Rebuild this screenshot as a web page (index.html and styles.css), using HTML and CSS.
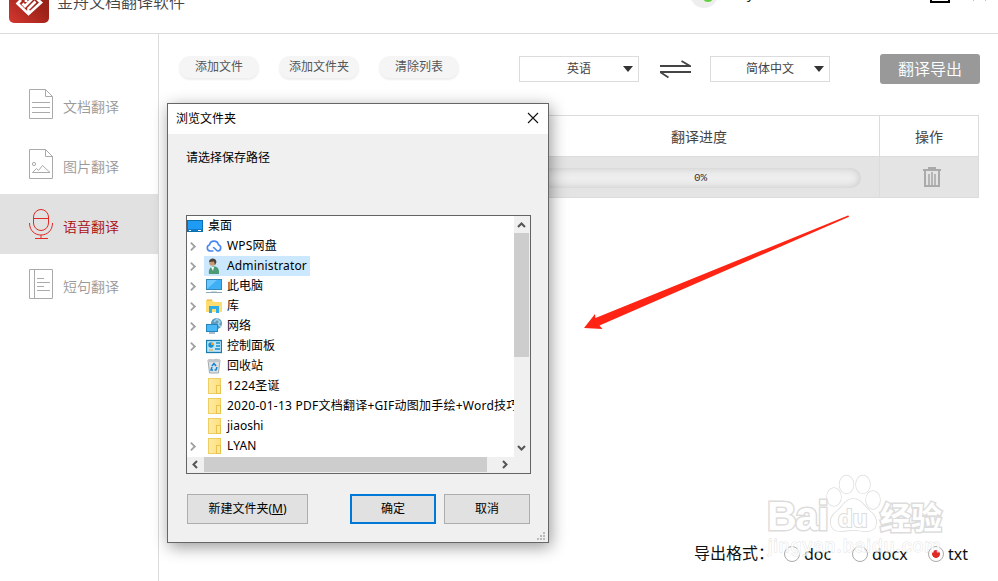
FILE: index.html
```html
<!DOCTYPE html>
<html lang="zh-CN">
<head>
<meta charset="utf-8">
<title>金舟文档翻译软件</title>
<link rel="stylesheet" href="styles.css">
</head>
<body>
<div class="app">
  <header class="header">
    <svg class="logo" width="40" height="40" viewBox="0 0 40 40">
      <defs><linearGradient id="lg" x1="0" y1="1" x2="1" y2="0"><stop offset="0" stop-color="#d4382f"/><stop offset=".6" stop-color="#9c2219"/><stop offset="1" stop-color="#8c2018"/></linearGradient></defs>
      <rect width="40" height="40" rx="5" fill="url(#lg)"/>
      <path d="M12 17 8.500 20.500 19.500 31 32 19.500 28 16M13.500 20.500 16 23 24 15M19 26 26.500 18.500M19.500 31V25.500M17 13v6" fill="none" stroke="#fff" stroke-width="2.700"/>
    </svg>
    <h1 class="brand">金舟文档翻译软件</h1>
    <svg class="avatar" width="28" height="28" viewBox="0 0 28 28"><circle cx="14" cy="14" r="14" fill="#eee"/><ellipse cx="18" cy="18.500" rx="4.500" ry="3.500" fill="#5fd13b"/></svg>
    <span class="user">y</span>
    <svg class="winctl" width="60" height="16" viewBox="0 0 60 16"><path d="M2 0V14H20V0" fill="none" stroke="#000" stroke-width="2"/><path d="M44.500 12.500 50 7M57 12.500 51 7" stroke="#888" fill="none"/></svg>
  </header>
  <div class="content">
    <nav class="side">
      <a class="nav"><svg width="24" height="30" viewBox="0 0 24 30"><path d="M.5.5H16.500L23.500 7.500V29.500H.5ZM16.500.5V7.500H23.500M3 13.500H21M3 18.500H21M3 23.500H21"/></svg><span>文档翻译</span></a>
      <a class="nav"><svg width="24" height="30" viewBox="0 0 24 30"><path d="M.5.5H16.500L23.500 7.500V29.500H.5ZM16.500.5V7.500H23.500M3.500 23.500 7.500 19.500 9.500 21.500 13.500 16.500 21 23.500Z"/><circle cx="5" cy="15" r="1.600"/></svg><span>图片翻译</span></a>
      <a class="nav active"><svg width="24" height="30" viewBox="0 0 24 30"><rect x="4.500" y=".5" width="15" height="21" rx="7.500"/><path d="M4.500 9.500H19.500M.5 14C.5 30 23.500 30 23.500 14M12 26V29.500M6 29.500H19"/></svg><span>语音翻译</span></a>
      <a class="nav"><svg width="24" height="30" viewBox="0 0 24 30"><path d="M.5.5H23.500V29.500H.5ZM5.500.5V29.500M8 9.500H15M8 13.500H21M8 17.500H15M8 21.500H21"/></svg><span>短句翻译</span></a>
    </nav>
    <main class="main">
      <div class="toolbar">
        <span class="pill">添加文件</span><span class="pill">添加文件夹</span><span class="pill">清除列表</span>
        <span class="select from">英语</span>
        <svg class="swap" width="31" height="19" viewBox="0 0 31 19"><path d="M0 6H30L21.500 1M31 12H0L8.500 17.500" fill="none" stroke="#444" stroke-width="1.800"/></svg>
        <span class="select to">简体中文</span>
        <span class="export">翻译导出</span>
      </div>
      <div class="table">
        <div class="th">翻译进度</div><div class="th op">操作</div>
        <div class="td"><div class="progress">0%</div></div>
        <div class="td op"><svg width="18" height="21" viewBox="0 0 18 21" fill="none" stroke="#aaa"><path d="M0 3H18M5 1H13" stroke-width="2"/><path d="M2 3V19H16V3" stroke-width="2"/><path d="M6 7V18M9 5V18M12 7V18" stroke-width="1.600"/></svg></div>
      </div>
      <div class="spacer"></div>
      <div class="formats">
        <span class="label">导出格式：</span>
        <span class="radio"><i></i>doc</span><span class="radio r2"><i></i>docx</span><span class="radio r3"><i class="on"></i>txt</span>
      </div>
    </main>
  </div>
</div>

<section class="dialog">
  <div class="title">浏览文件夹<svg width="12" height="12" viewBox="0 0 12 12"><path d="M1 1 11 11M11 1 1 11" stroke="#111" stroke-width="1.100"/></svg></div>
  <p class="prompt">请选择保存路径</p>
  <div class="tree">
    <div class="rows">
      <div class="row root"><svg width="16" height="16" viewBox="0 0 16 16"><rect x=".5" y="2.500" width="15" height="11" fill="#1d9bf5" stroke="#0b6fae"/><path d="M1 12H15" stroke="#0a5a96"/><path d="M2 12.500H4M11 12.500H14" stroke="#fff"/></svg><span>桌面</span></div>
      <div class="row"><b></b><svg width="16" height="16" viewBox="0 0 16 16"><path d="M7.500 13H4A3.200 3.200 0 0 1 3.500 6.800 4.600 4.600 0 0 1 12.500 6.800 3.200 3.200 0 0 1 12 13C9.500 13 9.500 9.500 6.800 9.500" fill="none" stroke="#4a86f0" stroke-width="1.600"/></svg><span class="lat">WPS网盘</span></div>
      <div class="row"><b></b><div class="sel"><svg width="16" height="16" viewBox="0 0 16 16"><path d="M3 16C2 11 5 8.500 7 8.500 11 8 13.500 10 13 16Z" fill="#4c9a77"/><circle cx="6.500" cy="4.500" r="3.300" fill="#c99a72"/><path d="M3 4C3-.5 10-1 10.500 4L9 7 8 3.500Z" fill="#4b4038"/><path d="M5 9 7 13 8 9" fill="#fff"/></svg><span class="admin">Administrator</span></div></div>
      <div class="row"><b></b><svg width="16" height="16" viewBox="0 0 16 16"><rect x=".5" y="1.500" width="15" height="10" fill="#6cc8ff" stroke="#3487b9"/><path d="M1 11 11 2H15V11Z" fill="#3fb0f6"/><path d="M5 13.500H11" stroke="#cdd" /><path d="M0 14.500H16" stroke="#8fa9b8"/></svg><span>此电脑</span></div>
      <div class="row"><b></b><svg width="16" height="16" viewBox="0 0 16 16"><path d="M0 2H6L8 4H16V14H0Z" fill="#ffdc70"/><path d="M1 2H6" stroke="#e9a52c"/><path d="M3 15V8H13V15H10V11H6V15Z" fill="#2eade7"/></svg><span>库</span></div>
      <div class="row"><b></b><svg width="16" height="16" viewBox="0 0 16 16"><circle cx="10.500" cy="5.500" r="5.500" fill="#5a9cc0"/><path d="M8 4 11 1 14 4 12 6 15 9" fill="none" stroke="#a4d2e8" stroke-width="1.500"/><rect x=".5" y="6.500" width="11" height="7" fill="#4bb8f8" stroke="#2784ba"/><path d="M3 15H9" stroke="#587d93"/></svg><span>网络</span></div>
      <div class="row"><b></b><svg width="16" height="16" viewBox="0 0 16 16"><rect x=".5" y="2.500" width="15" height="12" fill="#bce7fb" stroke="#187cac" stroke-width="1.300"/><circle cx="5" cy="7" r="2.700" fill="#168ed0"/><path d="M5 7V4.300A2.700 2.700 0 0 1 7.700 7Z" fill="#f49b26"/><path d="M10 5H14M10 8H14M9 11H14" stroke="#168ed0" stroke-width="1.500"/><path d="M3 12H7" stroke="#f49b26"/></svg><span>控制面板</span></div>
      <div class="row"><b class="none"></b><svg width="16" height="16" viewBox="0 0 16 16"><path d="M2 2H14L12.500 15H3.500Z" fill="#dde1e3" stroke="#a3abaf"/><path d="M2 2 5 1 7 2 10 .5 14 2V4H2Z" fill="#bfc5c8"/><path d="M6 8 8 5.500 10 8M11 9 10 12H8.500M7 12H5L6 9" fill="none" stroke="#1784d0" stroke-width="1.500"/></svg><span>回收站</span></div>
      <div class="row"><b class="none"></b><i class="folder"></i><span class="lat">1224圣诞</span></div>
      <div class="row"><b class="none"></b><i class="folder"></i><span class="long">2020-01-13 PDF文档翻译+GIF动图加手绘+Word技巧</span></div>
      <div class="row"><b class="none"></b><i class="folder"></i><span>jiaoshi</span></div>
      <div class="row"><b></b><i class="folder"></i><span class="lat">LYAN</span></div>
    </div>
    <div class="vbar"><svg width="9" height="6" viewBox="0 0 9 6"><path d="M1 5 4.500 1.500 8 5"/></svg><div class="vthumb"></div><svg class="down" width="9" height="6" viewBox="0 0 9 6"><path d="M1 1 4.500 4.500 8 1"/></svg></div>
    <div class="hbar"><svg width="6" height="9" viewBox="0 0 6 9"><path d="M5 1 1.500 4.500 5 8"/></svg><div class="hthumb"></div><svg class="right" width="6" height="9" viewBox="0 0 6 9"><path d="M1 1 4.500 4.500 1 8"/></svg></div>
  </div>
  <div class="buttons"><span class="btn new">新建文件夹(<u>M</u>)</span><span class="btn ok">确定</span><span class="btn">取消</span></div>
  <svg class="grip" width="8" height="8" viewBox="0 0 8 8"><path d="M6 0H8V2H6ZM3 3H5V5H3ZM6 3H8V5H6ZM0 6H2V8H0ZM3 6H5V8H3ZM6 6H8V8H6Z" fill="#bbb"/></svg>
</section>

<svg class="arrow" width="266" height="116" viewBox="0 0 266 116"><path d="M264 .5Q266 .5 264.500 2L15.500 110.500 18.500 114 0 113 11 99 11.500 103Z" fill="#ff2414"/></svg>

<div class="mark">
  <svg width="56" height="60" viewBox="0 0 56 60"><g fill="#fff" stroke="#ddd" stroke-width="1.500"><ellipse cx="8" cy="23" rx="7" ry="9"/><ellipse cx="20.500" cy="10.500" rx="7" ry="9"/><ellipse cx="37" cy="10.500" rx="7" ry="9"/><ellipse cx="47" cy="26" rx="7" ry="9"/><path d="M27 25C19 25 17 33 10 38 2 44 3 57 14 57 20 57 24 56 28 56 33 56 37 58 43 57 52 55 52 45 46 39 38 33 36 25 27 25Z"/></g></svg>
  <span class="m-bai">Bai</span><span class="m-du">du</span><span class="m-jy">经验</span>
  <span class="m-url">jingyan.baidu.com</span>
</div>
</body>
</html>
```
FILE: styles.css
```css
* { box-sizing: border-box; }
body { margin: 0; width: 998px; height: 581px; overflow: hidden; position: relative; background: #fff; color: #444; font: 12px/20px "Noto Sans", "Noto Sans CJK SC", sans-serif; }
svg { flex: none; display: block; }
.app { height: 581px; display: flex; flex-direction: column; }
.header { height: 34px; flex: none; display: flex; align-items: flex-start; border-bottom: 1px solid #dcdcdc; overflow: hidden; }
.logo { margin: -17px 8px 0 9px; }
.brand { margin: -10px 0 0; width: 633px; font-size: 16px; line-height: 24px; font-weight: 350; color: #444; }
.avatar { margin-top: -20px; }
.user { margin: -17px 0 0 29px; width: 19px; color: #222; font-size: 14px; }
.winctl { margin: -12px 0 0 163px; }
.content { display: flex; flex: 1; min-height: 0; }
.side { width: 159px; flex: none; border-right: 1px solid #dcdcdc; padding-top: 40px; }
.nav { height: 60px; display: flex; align-items: center; gap: 10px; padding-left: 29px; font-size: 14px; line-height: 20px; font-weight: 350; color: #999; }
.nav span { padding-top: 5px; }
.nav svg { fill: none; stroke: #aaa; }
.nav.active { background: #e1e1e1; color: #a90d12; }
.nav.active svg { stroke: #e12a25; }
.main { flex: 1; display: flex; flex-direction: column; padding: 20px 18px 0 20px; }
.toolbar { display: flex; height: 61px; align-items: flex-start; }
.pill { width: 80px; height: 22px; margin: 2px 20px 0 0; border-radius: 11px; background: #f5f5f5; box-shadow: 0 2px 2px #eee; text-align: center; line-height: 21px; color: #555; }
.select { position: relative; width: 120px; height: 26px; margin-top: 2px; border: 1px solid #dcdcdc; text-align: center; line-height: 24px; color: #444; }
.from { margin-left: 40px; }
.select::after { content: ""; position: absolute; right: 5px; top: 9px; border: 5px solid transparent; border-top: 6px solid #333; border-bottom: 0; }
.swap { margin: 6px 19px 0 21px; }
.export { width: 100px; height: 30px; margin-left: 50px; border-radius: 3px; background: #999; color: #fff; font-size: 16px; font-weight: 350; line-height: 31px; text-align: center; }
.table { width: 800px; display: grid; grid-template-columns: 700px 99px; grid-template-rows: 41px 41px; border: solid #dcdcdc; border-width: 1px 0 0 1px; }
.th, .td { border: solid #dcdcdc; border-width: 0 1px 1px 0; }
.th { font-size: 14px; line-height: 41px; padding-left: 491px; }
.th.op { padding: 0; text-align: center; }
.td { background: #e4e4e4; display: flex; align-items: center; }
.td.op { justify-content: center; padding-left: 6px; }
.progress { width: 321px; height: 20px; margin: 1px 0 0 360px; border-radius: 10px; background: #eee; box-shadow: inset 0 0 8px #c4c4c4; text-align: center; font: 11px/20px "Liberation Mono", monospace; color: #333; }
.spacer { flex: 1; }
.formats { height: 38px; display: flex; align-items: flex-start; padding-left: 515px; font-size: 16px; line-height: 22px; color: #111; white-space: nowrap; }
.label { width: 90px; margin-top: -1px; }
.radio { display: flex; align-items: flex-start; gap: 4px; width: 68px; }
.radio.r2 { width: 76px; }
.radio.r3 { width: 44px; }
.radio i { flex: none; width: 16px; height: 16px; margin-top: 3px; border: 1px solid #aaa; border-radius: 50%; background: #fff; }
.radio i.on { background: radial-gradient(circle, #e12a24 0 3.500px, #fff 4.300px); }
.dialog { position: absolute; left: 167px; top: 103px; width: 382px; height: 440px; border: 1px solid #666; background: #f0f0f0; color: #000; box-shadow: 2px 4px 15px #0006; display: flex; flex-direction: column; padding-bottom: 18px; }
.title { height: 30px; background: #fff; display: flex; justify-content: space-between; align-items: center; padding: 0 9px 0 8px; }
.title svg { margin-top: -2px; }
.prompt { margin: 14px 18px 47px; line-height: 20px; }
.tree { margin-left: 18px; width: 345px; height: 259px; border: 1px solid #646464; background: #f0f0f0; display: grid; grid-template-columns: 327px 16px; grid-template-rows: 241px 16px; }
.rows { overflow: hidden; background: #fff; }
.row { height: 20px; display: flex; align-items: center; padding-left: 3px; white-space: nowrap; line-height: 18px; }
.row svg, .folder { flex: none; margin-right: 5px; }
.row.root { padding-left: 0; }
.row b { flex: none; width: 7px; height: 7px; margin: 0 10px 0 -2px; border: solid #a0a0a0; border-width: 2px 2px 0 0; transform: rotate(45deg) scale(.9); }
.row b.none { visibility: hidden; }
.row b + svg { margin-left: 1px; }
.sel { display: flex; align-items: center; height: 20px; margin-left: -1px; padding: 0 3px 0 2px; background: #cce8ff; }
.admin { letter-spacing: .15px; }
.long { letter-spacing: .25px; }
.lat { letter-spacing: .2px; }
.folder { width: 13px; height: 16px; margin: 0 6px 0 3px; border: 1px solid #edce62; background: linear-gradient(90deg, #ffeaa4, #ffdf7e); position: relative; }
.folder::after { content: ""; position: absolute; right: -1px; bottom: -1px; width: 3px; height: 7px; border: 1px solid #e8c44c; background: #ffe79a; }
.vbar { display: flex; flex-direction: column; align-items: center; padding: 6px 1px 0 0; }
.vbar path, .hbar path { fill: none; stroke: #555; stroke-width: 2; }
.vthumb { width: 15px; height: 124px; margin-top: 5px; background: #cdcdcd; }
.down { margin-top: 88px; }
.hbar { display: flex; align-items: center; padding: 0 0 1px 5px; }
.hthumb { width: 283px; height: 15px; margin-left: 6px; background: #cdcdcd; }
.right { margin-left: 15px; }
.buttons { display: flex; gap: 8px; margin: 20px 0 0 19px; }
.btn { width: 86px; height: 30px; border: 1px solid #adadad; background: #e1e1e1; text-align: center; line-height: 27px; }
.btn.new { width: 121px; margin-right: 34px; }
.btn.ok { border: 2px solid #0078d7; line-height: 25px; }
.grip { position: absolute; right: 3px; bottom: 2px; }
.arrow { position: absolute; left: 584px; top: 215px; }
.mark { position: absolute; left: 764px; top: 474px; width: 190px; height: 90px; color: #fff; -webkit-text-stroke: 3px #dcdcdc; paint-order: stroke fill; white-space: nowrap; }
.mark svg, .mark span { position: absolute; }
.mark svg { left: 62px; top: 0; }
.m-bai { left: 3px; top: 20px; font: bold 41px/44px "Liberation Sans", sans-serif; letter-spacing: -1px; }
.m-du { left: 74px; top: 31px; font: bold 24px/28px "Liberation Sans", sans-serif; -webkit-text-stroke-width: 2px; }
.m-jy { left: 116px; top: 24px; font: bold 31px/36px "Noto Sans CJK SC", sans-serif; }
.m-url { left: 4px; top: 60px; font: 19px/24px "Liberation Sans", sans-serif; letter-spacing: 1.200px; -webkit-text-stroke: 1px #ddd; opacity: .8; }
```
